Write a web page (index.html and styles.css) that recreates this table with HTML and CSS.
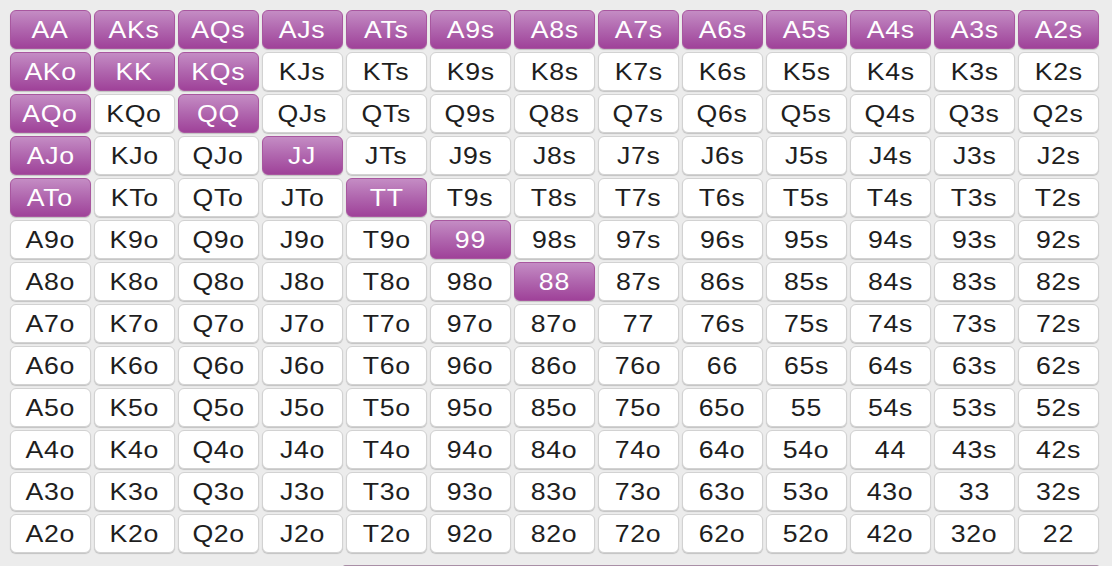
FILE: index.html
```html
<!DOCTYPE html>
<html>
<head>
<meta charset="utf-8">
<link rel="stylesheet" href="styles.css">
</head>
<body>
<div class="page">
  <div class="grid" id="grid"></div>
  <div class="below"><div class="below-bar"></div></div>
</div>
<script src="app.js"></script>
</body>
</html>
```
FILE: styles.css
```css
html, body {
  margin: 0;
  padding: 0;
  background: #ececec;
  overflow: hidden;
}
.page {
  padding: 9.5px 0 0 9.5px;
  width: 1089px;
}
.grid {
  display: grid;
  grid-template-columns: repeat(13, 81px);
  grid-auto-rows: 39px;
  gap: 3px;
}
.cell {
  box-sizing: border-box;
  background: #ffffff;
  border: 1px solid #d2d2d2;
  border-radius: 6px;
  box-shadow: 0 1px 1px rgba(0,0,0,0.18);
  display: flex;
  align-items: center;
  justify-content: center;
  padding-top: 2px;
  font-family: "Liberation Sans", Arial, sans-serif;
  font-size: 23px;
  color: #1e1e1e;
}
.label {
  display: inline-block;
  transform: scaleX(1.16);
  letter-spacing: 0.6px;
  margin-right: -0.6px;
}
.cell.on {
  background: linear-gradient(to bottom, #c48cc4 0%, #b066ae 50%, #9f4299 100%);
  border-color: #a8579f;
  color: #ffffff;
}
.below {
  margin-top: 12px;
  padding-left: 333px;
}
.below-bar {
  height: 2px;
  background: #a98fa6;
  border-radius: 2px 2px 0 0;
}
```
FILE: app.js
```js
var r = ['A','K','Q','J','T','9','8','7','6','5','4','3','2'];
var on = {'AA':1,'AKs':1,'AQs':1,'AJs':1,'ATs':1,'A9s':1,'A8s':1,'A7s':1,'A6s':1,'A5s':1,'A4s':1,'A3s':1,'A2s':1,
'AKo':1,'KK':1,'KQs':1,'AQo':1,'QQ':1,'AJo':1,'JJ':1,'ATo':1,'TT':1,'99':1,'88':1};
var g = document.getElementById('grid');
for (var i = 0; i < 13; i++) {
  for (var j = 0; j < 13; j++) {
    var t;
    if (i === j) t = r[i] + r[j];
    else if (j > i) t = r[i] + r[j] + 's';
    else t = r[j] + r[i] + 'o';
    var d = document.createElement('div');
    d.className = 'cell' + (on[t] ? ' on' : '');
    var s = document.createElement('span');
    s.className = 'label';
    s.textContent = t;
    d.appendChild(s);
    g.appendChild(d);
  }
}
```
